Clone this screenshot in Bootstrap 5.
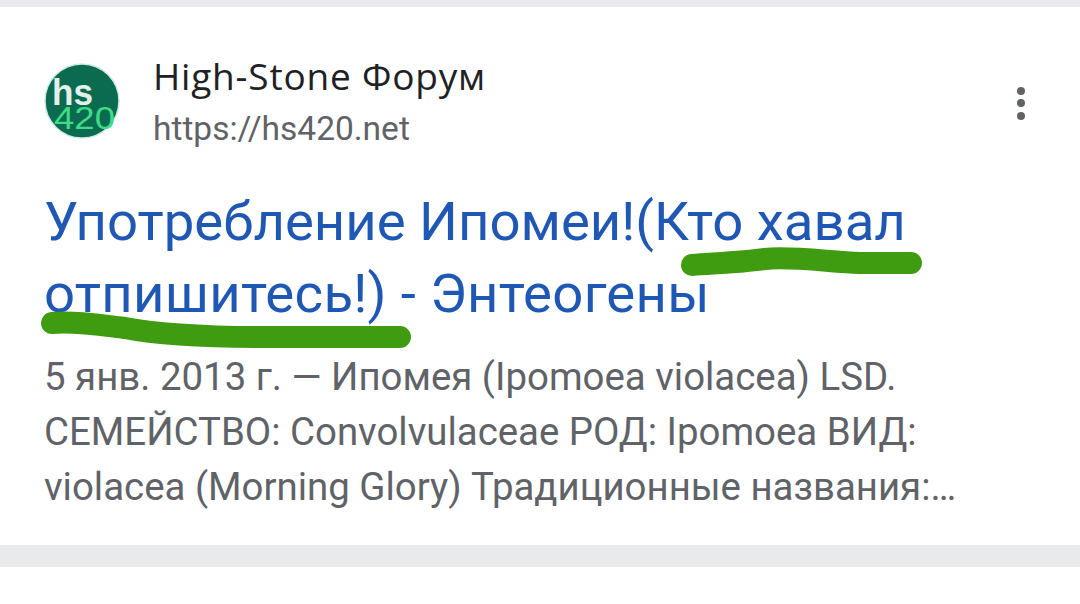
<!DOCTYPE html>
<html lang="ru">
<head>
<meta charset="utf-8">
<link href="https://cdn.jsdelivr.net/npm/bootstrap@5.3.0/dist/css/bootstrap.min.css" rel="stylesheet">
<style>
html,body{height:604px;overflow:hidden;background:#fff;}
body{font-family:Roboto,"Liberation Sans",sans-serif;position:relative;}
.band-top{height:7px;background:#e8eaed;}
.band-bottom{height:22px;background:#e8eaec;}
.result-box{height:538px;padding:50px 0 0 44px;background:#fff;}
.site-head{height:92px;}
.site-logo{width:76px;height:76px;flex:none;margin-bottom:4px;}
.site-logo text{font-family:"Liberation Sans",sans-serif;}
.logo-top{font-weight:700;}
.logo-bottom{font-weight:400;}
.site-info{margin-left:33px;}
.site-name{font-family:"Open Sans",Roboto,sans-serif;font-size:37px;line-height:44px;color:#202124;letter-spacing:.8px;margin-top:-2px;}
.site-url{font-size:33.5px;line-height:44px;color:#5f6368;margin-top:9px;}
.more-dots{width:12px;gap:4.5px;margin-right:53px;}
.more-dots span{display:block;width:8px;height:8px;border-radius:50%;background:#5f6368;}
.result-title{display:block;font-size:54.5px;line-height:72px;color:#1f57b5;text-decoration:none;margin-top:36px;}
.title-second{letter-spacing:.3px;}
.result-text{font-size:38.4px;line-height:55px;color:#5f6368;margin-top:20px;white-space:nowrap;}
.marker-lines{position:absolute;left:0;top:0;width:1080px;height:604px;pointer-events:none;}
</style>
</head>
<body>
<div class="band-top"></div>
<div class="result-box">
  <div class="site-head d-flex align-items-center">
    <svg class="site-logo" viewBox="0 0 76 76" role="img" aria-label="hs420">
      <circle cx="38" cy="38" r="37" fill="#0b6b50" stroke="#cfe8df" stroke-width="1.5"/>
      <text class="logo-top" x="8" y="42" font-size="36" fill="#e3efeb" textLength="41" lengthAdjust="spacingAndGlyphs">hs</text>
      <text class="logo-bottom" x="10" y="66" font-size="32" fill="#3fdc83" textLength="61" lengthAdjust="spacingAndGlyphs">420</text>
    </svg>
    <div class="site-info flex-grow-1">
      <div class="site-name">High-Stone Форум</div>
      <div class="site-url">https://hs420.net</div>
    </div>
    <div class="more-dots d-flex flex-column align-items-center"><span></span><span></span><span></span></div>
  </div>
  <a class="result-title" href="#">Употребление Ипомеи!(Кто хавал<br><span class="title-second">отпишитесь!) - Энтеогены</span></a>
  <div class="result-text">5 янв. 2013 г. — Ипомея (Ipomoea violacea) LSD.<br>СЕМЕЙСТВО: Convolvulaceae РОД: Ipomoea ВИД:<br>violacea (Morning Glory) Традиционные названия:…</div>
</div>
<div class="band-bottom"></div>
<svg class="marker-lines" viewBox="0 0 1080 604" fill="none" stroke="#3f9c10" stroke-width="22" stroke-linecap="round" stroke-linejoin="round">
  <path d="M692 265C720 263 745 262 765 259C790 256 830 262 860 263L911 263"/>
  <path d="M52 323C75 321 100 325 125 328C150 333 200 337 260 337L400 337"/>
</svg>
</body>
</html>
